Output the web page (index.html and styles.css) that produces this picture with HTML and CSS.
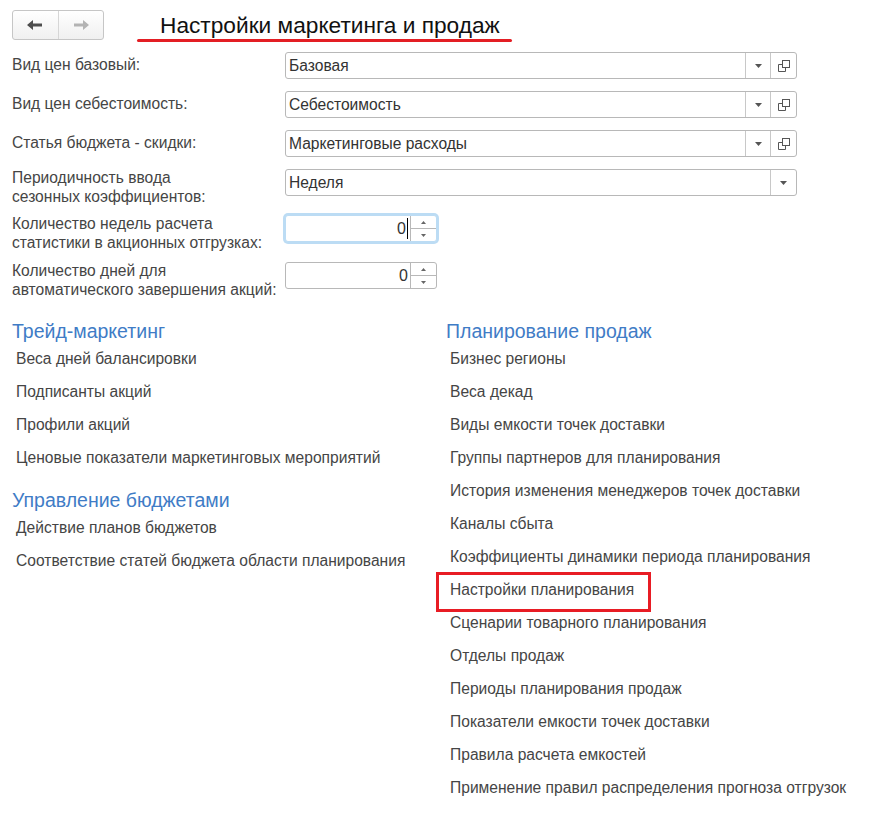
FILE: index.html
```html
<!DOCTYPE html>
<html lang="ru">
<head>
<meta charset="utf-8">
<title>Настройки маркетинга и продаж</title>
<link rel="stylesheet" href="styles.css">
</head>
<body>
<header class="top">
  <div class="nav">
    <button class="nav-btn" aria-label="Назад">
      <svg width="16" height="10" viewBox="0 0 16 10"><path d="M0 5 L6 0 V3.5 H15 V6.5 H6 V10 Z" fill="#4d4d4d"/></svg>
    </button>
    <button class="nav-btn" aria-label="Вперед">
      <svg width="16" height="10" viewBox="0 0 16 10"><path d="M16 5 L10 0 V3.5 H1 V6.5 H10 V10 Z" fill="#b3b3b3"/></svg>
    </button>
  </div>
  <h1 class="title">Настройки маркетинга и продаж</h1>
</header>

<main class="form">
  <div class="row">
    <label class="lbl">Вид цен базовый:</label>
    <div class="field wide">
      <span class="value">Базовая</span>
      <span class="btn dd"><svg width="7" height="4" viewBox="0 0 7 4"><path d="M0 0H7L3.5 4Z" fill="#555"/></svg></span>
      <span class="btn open"><svg width="12" height="12" viewBox="0 0 12 12"><rect x="4.5" y="0.5" width="7" height="7" fill="none" stroke="#555"/><path d="M4.5 4.5H0.5V11.5H7.5V7.5" fill="none" stroke="#555"/></svg></span>
    </div>
  </div>
  <div class="row">
    <label class="lbl">Вид цен себестоимость:</label>
    <div class="field wide">
      <span class="value">Себестоимость</span>
      <span class="btn dd"><svg width="7" height="4" viewBox="0 0 7 4"><path d="M0 0H7L3.5 4Z" fill="#555"/></svg></span>
      <span class="btn open"><svg width="12" height="12" viewBox="0 0 12 12"><rect x="4.5" y="0.5" width="7" height="7" fill="none" stroke="#555"/><path d="M4.5 4.5H0.5V11.5H7.5V7.5" fill="none" stroke="#555"/></svg></span>
    </div>
  </div>
  <div class="row">
    <label class="lbl">Статья бюджета - скидки:</label>
    <div class="field wide">
      <span class="value">Маркетинговые расходы</span>
      <span class="btn dd"><svg width="7" height="4" viewBox="0 0 7 4"><path d="M0 0H7L3.5 4Z" fill="#555"/></svg></span>
      <span class="btn open"><svg width="12" height="12" viewBox="0 0 12 12"><rect x="4.5" y="0.5" width="7" height="7" fill="none" stroke="#555"/><path d="M4.5 4.5H0.5V11.5H7.5V7.5" fill="none" stroke="#555"/></svg></span>
    </div>
  </div>
  <div class="row">
    <label class="lbl two">Периодичность ввода<br>сезонных коэффициентов:</label>
    <div class="field wide">
      <span class="value">Неделя</span>
      <span class="btn dd last"><svg width="7" height="4" viewBox="0 0 7 4"><path d="M0 0H7L3.5 4Z" fill="#555"/></svg></span>
    </div>
  </div>
  <div class="row row-num1">
    <label class="lbl two">Количество недель расчета<br>статистики в акционных отгрузках:</label>
    <div class="field num focused">
      <span class="value num-val">0<i class="caret"></i></span>
      <span class="spin"><span class="sp"><svg width="5" height="3" viewBox="0 0 5 3"><path d="M0 3H5L2.5 0Z" fill="#666"/></svg></span><span class="sp"><svg width="5" height="3" viewBox="0 0 5 3"><path d="M0 0H5L2.5 3Z" fill="#666"/></svg></span></span>
    </div>
  </div>
  <div class="row row-num2">
    <label class="lbl two">Количество дней для<br>автоматического завершения акций:</label>
    <div class="field num">
      <span class="value num-val">0</span>
      <span class="spin"><span class="sp"><svg width="5" height="3" viewBox="0 0 5 3"><path d="M0 3H5L2.5 0Z" fill="#666"/></svg></span><span class="sp"><svg width="5" height="3" viewBox="0 0 5 3"><path d="M0 0H5L2.5 3Z" fill="#666"/></svg></span></span>
    </div>
  </div>
</main>

<section class="groups">
  <div class="col">
    <h2 class="ghead">Трейд-маркетинг</h2>
    <ul class="links">
      <li>Веса дней балансировки</li>
      <li>Подписанты акций</li>
      <li>Профили акций</li>
      <li>Ценовые показатели маркетинговых мероприятий</li>
    </ul>
    <h2 class="ghead next">Управление бюджетами</h2>
    <ul class="links">
      <li>Действие планов бюджетов</li>
      <li>Соответствие статей бюджета области планирования</li>
    </ul>
  </div>
  <div class="col">
    <h2 class="ghead">Планирование продаж</h2>
    <ul class="links">
      <li>Бизнес регионы</li>
      <li>Веса декад</li>
      <li>Виды емкости точек доставки</li>
      <li>Группы партнеров для планирования</li>
      <li>История изменения менеджеров точек доставки</li>
      <li>Каналы сбыта</li>
      <li>Коэффициенты динамики периода планирования</li>
      <li class="marked">Настройки планирования</li>
      <li>Сценарии товарного планирования</li>
      <li>Отделы продаж</li>
      <li>Периоды планирования продаж</li>
      <li>Показатели емкости точек доставки</li>
      <li>Правила расчета емкостей</li>
      <li>Применение правил распределения прогноза отгрузок</li>
    </ul>
  </div>
</section>
</body>
</html>
```

FILE: styles.css
```css
* { box-sizing: border-box; }
html, body { margin: 0; padding: 0; background: #fff; }
body {
  font-family: "Liberation Sans", Arial, sans-serif;
  color: #454545;
  font-size: 15.6px;
}

/* header */
.top {
  display: flex;
  align-items: flex-start;
  padding: 10px 0 0 12px;
  height: 52px;
}
.nav {
  display: flex;
  width: 92px;
  height: 30px;
  border: 1px solid #c6c6c6;
  border-radius: 3px;
  background: linear-gradient(#ffffff, #f0f0f0);
  overflow: hidden;
}
.nav-btn {
  flex: 1;
  display: flex;
  align-items: center;
  justify-content: center;
  border: 0;
  background: transparent;
  padding: 0;
}
.nav-btn + .nav-btn { border-left: 1px solid #d6d6d6; }

.title {
  position: relative;
  margin: 2px 0 0 33px;
  padding: 0 12px 0 23px;
  font-weight: normal;
  font-size: 22.7px;
  line-height: 26px;
  color: #111;
}
.title::after {
  content: "";
  position: absolute;
  left: 0;
  right: 0;
  bottom: -4px;
  height: 3px;
  border-radius: 2px;
  background: #e31e24;
}

/* form */
.form { padding-left: 12px; }
.row {
  display: flex;
  align-items: center;
  height: 27px;
  margin-bottom: 12px;
}
.lbl {
  width: 273px;
  flex: none;
  line-height: 18.5px;
  color: #454545;
}
.lbl.two { padding-top: 10px; }
.row-num1 { margin-top: 19px; margin-bottom: 20px; }

.field {
  display: flex;
  align-items: stretch;
  height: 27px;
  border: 1px solid #b8b8b8;
  border-radius: 3px;
  background: #fff;
  color: #333;
}
.field.wide { width: 512px; }
.field.num { width: 152px; }
.field.focused {
  border-color: #bcdcf4;
  box-shadow: 0 0 0 2px #bcdcf4;
}
.value {
  flex: 1;
  display: flex;
  align-items: center;
  padding-left: 3px;
  white-space: nowrap;
}
.num-val { justify-content: flex-end; padding-right: 2px; font-size: 16px; }
.caret {
  display: inline-block;
  width: 1px;
  height: 21px;
  background: #000;
  margin-left: 1px;
}
.btn {
  display: flex;
  align-items: center;
  justify-content: center;
  border-left: 1px solid #c8c8c8;
}
.btn.dd { width: 25px; }
.btn.dd.last { width: 26px; }
.btn.open { width: 26px; }

.spin {
  width: 26px;
  display: flex;
  flex-direction: column;
  border-left: 1px solid #b8b8b8;
}
.sp {
  flex: 1;
  display: flex;
  align-items: center;
  justify-content: center;
}
.sp + .sp { border-top: 1px solid #b8b8b8; }

/* groups */
.groups {
  display: grid;
  grid-template-columns: 434px 428px;
  padding-left: 12px;
  margin-top: 31px;
}
.ghead {
  margin: 0;
  font-weight: normal;
  font-size: 19.5px;
  line-height: 22px;
  color: #3f7cc6;
}
.ghead.next { margin-top: 15px; }
.links {
  list-style: none;
  margin: 0;
  padding: 0 0 0 4px;
}
.links li {
  line-height: 33px;
  height: 33px;
  color: #454545;
  white-space: nowrap;
}
.links li.marked {
  position: relative;
}
.links li.marked::after {
  content: "";
  position: absolute;
  left: -14px;
  top: -1px;
  width: 209px;
  height: 34px;
  border: 3px solid #e81c24;
}
```
